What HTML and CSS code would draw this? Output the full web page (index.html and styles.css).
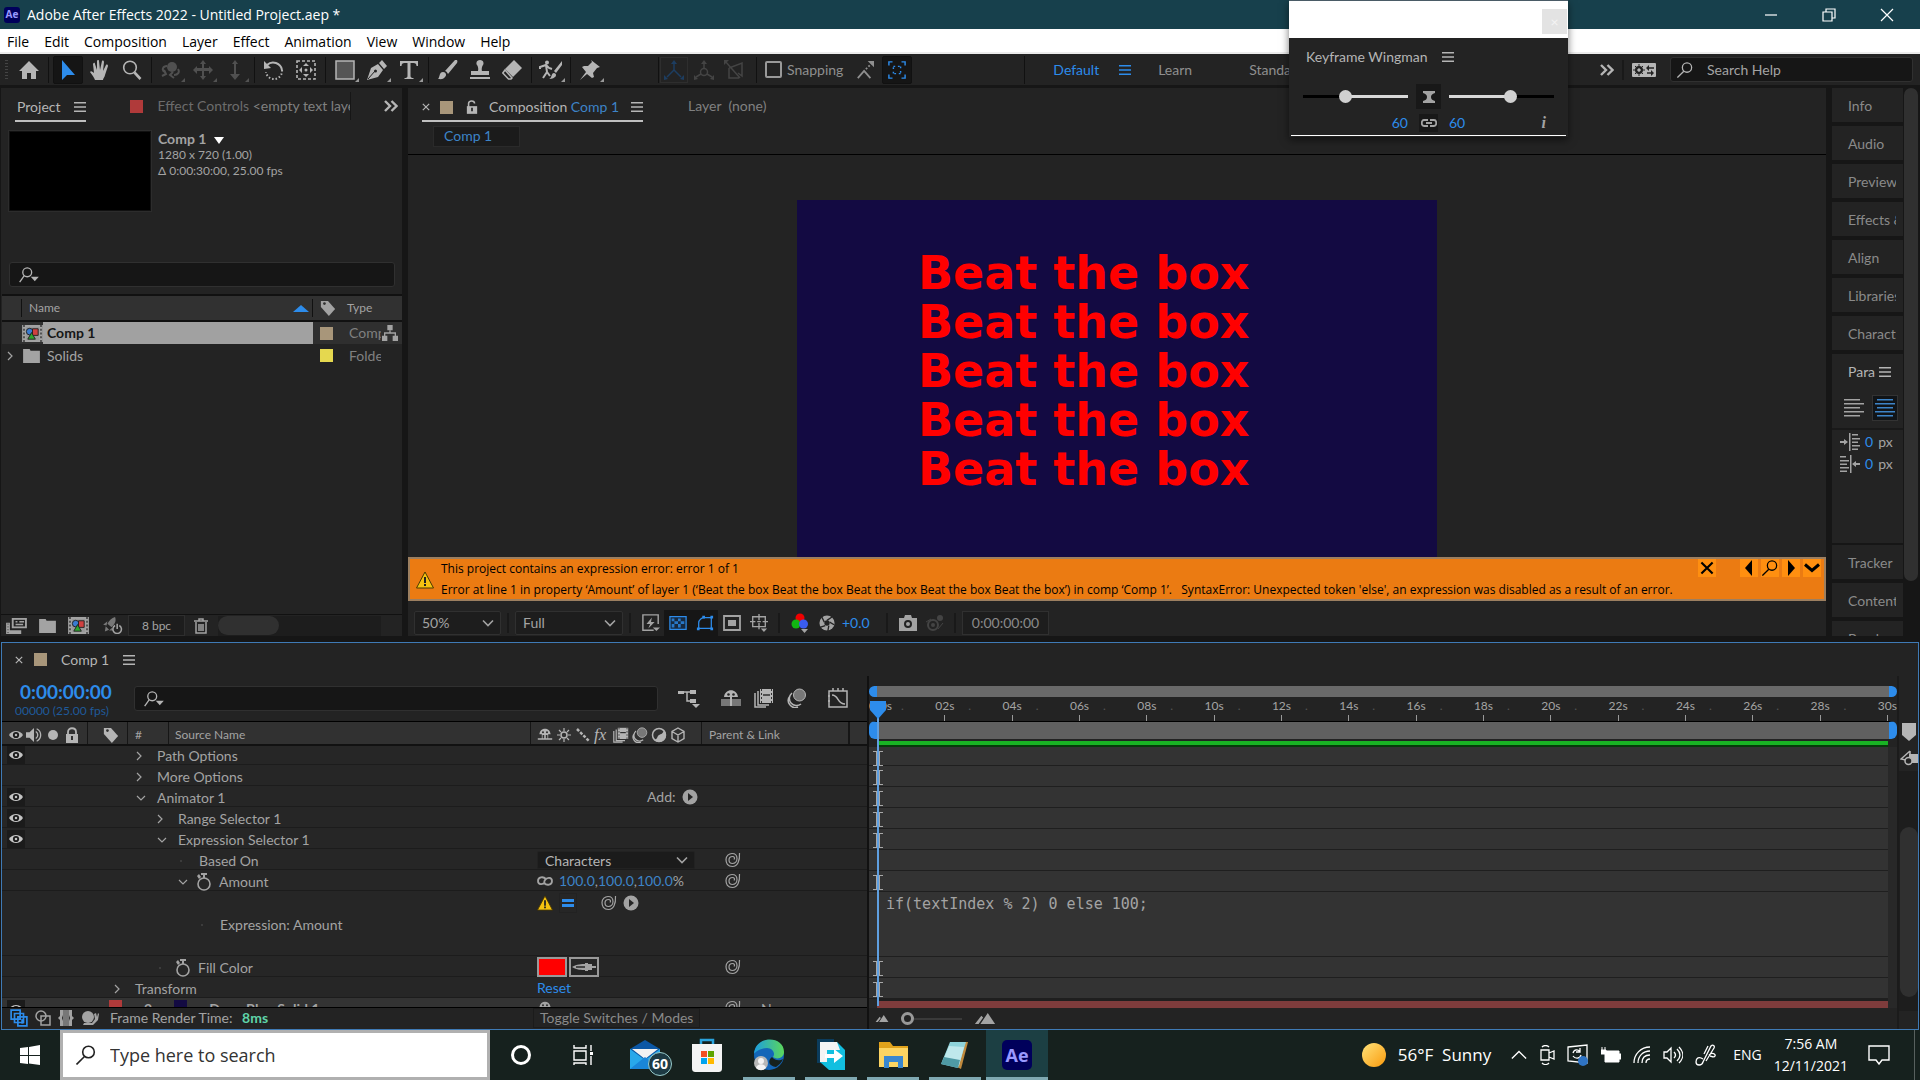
FILE: index.html
```html
<!DOCTYPE html>
<html lang="en">

<head>
  <meta charset="utf-8">
  <title>Adobe After Effects 2022 - Untitled Project.aep *</title>
  <link rel="stylesheet" href="styles.css">
</head>

<body>

  <!-- icon set -->
  <svg class="sprite" aria-hidden="true">
    <symbol id="home" viewBox="0 0 20 20"><path d="M10 1 0 11h3v8h5v-6h4v6h5v-8h3z"/></symbol>
    <symbol id="arrow" viewBox="0 0 20 20"><path d="M4 0v20l5-5h8z"/></symbol>
    <symbol id="hand" viewBox="0 0 20 20"><path d="M5 20c-1-3-3-5-5-8 1-2 3 0 4 1L3 4c1-2 2-1 2 0l2 6V1c1-2 2-1 2 0l1 9 2-9c1-1 2 0 2 1l-1 9 3-6c1-1 2 0 2 1l-3 9c0 2-2 3-2 5z"/></symbol>
    <symbol id="lens" viewBox="0 0 20 20"><g fill="none" stroke="currentColor"><circle cx="8" cy="7.500" r="6.300" stroke-width="1.600"/><path d="m12.500 12.500 6 6.500" stroke-width="2.600"/></g></symbol>
    <symbol id="orbit" viewBox="0 0 20 20"><g fill="none" stroke="currentColor" stroke-width="2"><path d="M6 6C2 6 0 10 4 12M13 15c4 0 6-3 4-6"/><path d="m3 10 2 4-4 2M12 12l-3 3 4 3"/></g><circle cx="11" cy="7" r="5"/></symbol>
    <symbol id="pan" viewBox="0 0 20 20"><path d="M10 0l3 4h-2v4h5V6l4 4-4 4v-3h-5v5h2l-3 4-3-4h2v-5H4v3l-4-4 4-4v2h5V4H7z"/></symbol>
    <symbol id="dolly" viewBox="0 0 20 20"><path d="M10 0l3 4h-2v10h4l-5 6-5-6h4V4H7z"/></symbol>
    <symbol id="rotate" viewBox="0 0 20 20"><path d="M3 5a9 9 0 0 1 15 5" fill="none" stroke="currentColor" stroke-width="2"/><path d="M18 10a8 8 0 0 1-16 2" fill="none" stroke="currentColor" stroke-width="2" stroke-dasharray="1.500 2"/><path d="M0 1v8l7-1z"/></symbol>
    <symbol id="anchor" viewBox="0 0 20 20"><path d="M1 1h18v18H1z" fill="none" stroke="currentColor" stroke-width="1.600" stroke-dasharray="3 2"/><path d="m10 3 3 3H7zM10 17l3-3H7zM3 10l3-3v6zM17 10l-3-3v6z"/><circle cx="10" cy="10" r="1.500"/></symbol>
    <symbol id="rect" viewBox="0 0 20 20"><path d="M1 1h18v18H1z" fill="#555" stroke="currentColor" stroke-width="1.500"/></symbol>
    <symbol id="pen" viewBox="0 0 20 20"><path d="M0 20 4 8l7-4 5 6-5 7zM12 3l3-3 5 6-3 3z"/><path d="m1 19 7-8" stroke="#232323"/><circle cx="8.500" cy="11" r="1.500" fill="#232323"/></symbol>
    <symbol id="text" viewBox="0 0 20 20"><path d="M1 1h18v5h-1.500c0-2-1-3-3-3h-3v13c0 1.500 1 2 3 2v1H5.500v-1c2 0 3-.5 3-2V3h-3c-2 0-3 1-3 3H1z"/></symbol>
    <symbol id="brush" viewBox="0 0 20 20"><path d="M0 19c2-2 1-7 5-7 3 0 4 3 2 5-2 3-5 2-7 2zM7 11 17 0c2-1 3 1 2 3L10 14c-1-2-2-3-3-3z"/></symbol>
    <symbol id="stamp" viewBox="0 0 20 20"><path d="M10 0c4 0 4 4 3 5-2 3-1 6-1 6h7v4H1v-4h7s1-3-1-6c-1-1-1-5 3-5zM0 17h20v2H0z"/></symbol>
    <symbol id="eraser" viewBox="0 0 20 20"><path d="M12 0 20 8 11 17 3 9z"/><path d="M3 10 0.800 13l5.700 6H9l1-1z" fill="none" stroke="currentColor" stroke-width="1.500"/></symbol>
    <symbol id="roto" viewBox="0 0 24 20"><circle cx="8" cy="2.500" r="2"/><path d="M1 9V7l6-2 3 3 3 1M7 5l1 7-4 6M8 12l3 4" fill="none" stroke="currentColor" stroke-width="2"/><path d="M10 19c3-1 2-6 5-6 4 1 2 6-5 6zM15 11l8-10v4l-6 8z"/></symbol>
    <symbol id="pin" viewBox="0 0 20 20"><path d="m11 0 9 7-3 1-4 5 1 4-2 1-5-4-7 6 6-8-4-5 2-1 4 0 4-4z"/></symbol>
    <symbol id="axis" viewBox="0 0 20 20"><path d="M10 10V3M10 10l-7 7M10 10l7 7" fill="none" stroke="currentColor" stroke-width="1.500"/><path d="m10 0 3 4H7zM0 20v-5l4 4zM20 20v-5l-4 4z"/></symbol>
    <symbol id="axis2" viewBox="0 0 20 20"><g fill="none" stroke="currentColor" stroke-width="1.500"><circle cx="10" cy="12" r="3.500"/><path d="M10 9V3M7 14l-5 3M13 14l5 3"/></g><path d="m10 0 3 4H7zM0 20v-5l4 4zM20 20v-5l-4 4z"/></symbol>
    <symbol id="axis3" viewBox="0 0 20 20"><path d="M5 8l13-5v13l-4-3M5 8v10l10 0M1 1l15 17" fill="none" stroke="currentColor" stroke-width="1.500"/><path d="M0 0h5L0 5z"/></symbol>
    <symbol id="snap" viewBox="0 0 20 20"><path d="m2 19 7-8 7 8" fill="none" stroke="currentColor" stroke-width="2"/><path d="m11 9 6-6" stroke="currentColor" stroke-width="2" stroke-dasharray="2 2"/><path d="M13 0h7v7z"/></symbol>
    <symbol id="brackets" viewBox="0 0 20 20"><g fill="none" stroke="currentColor" stroke-width="1.600"><path d="M1 5V1h4M15 1h4v4M19 15v4h-4M5 19H1v-4"/><path d="M6 9V6h3M11 6h3v3M14 11v3h-3M9 14H6v-3" stroke-dasharray="2 1"/></g></symbol>
    <symbol id="menu" viewBox="0 0 12 12"><path d="M0 1h12v1.500H0zM0 5.300h12v1.500H0zM0 9.600h12v1.500H0z"/></symbol>
    <symbol id="more" viewBox="0 0 14 12"><path d="m1 1 5 5-5 5M7.500 1l5 5-5 5" fill="none" stroke="currentColor" stroke-width="2.400"/></symbol>
    <symbol id="settings" viewBox="0 0 24 14"><rect width="24" height="14" rx="1"/><circle cx="7" cy="7" r="3" fill="none" stroke="#232323" stroke-width="2"/><path d="M7 1v12M1 7h12M3 3l8 8M11 3l-8 8" stroke="#232323" stroke-width="1"/><circle cx="7" cy="7" r="1.500"/><path d="M15 5h7M15 10h6" stroke="#232323" stroke-width="1.500"/><path d="m14 5 3-3v6zM22 10l-3-3v6z" fill="#232323"/></symbol>
    <symbol id="search" viewBox="0 0 20 20"><g fill="none" stroke="currentColor" stroke-width="1.600"><circle cx="12.500" cy="7" r="5.800"/><path d="m8.500 11.500-8 8"/></g></symbol>
    <symbol id="searchmenu" viewBox="0 0 22 18"><g fill="none" stroke="currentColor" stroke-width="1.500"><circle cx="9" cy="6" r="5"/><path d="m5.500 10-5 7"/></g><path d="M13 11h9l-4.500 5z"/></symbol>
    <symbol id="x" viewBox="0 0 10 10"><path d="m1 1 8 8M9 1 1 9" fill="none" stroke="currentColor" stroke-width="1.500"/></symbol>
    <symbol id="unlock" viewBox="0 0 14 16"><path d="M3 8V4c0-4 7-4 7 0" fill="none" stroke="currentColor" stroke-width="1.800"/><path d="M1 7h12v9H1z"/><path d="M7 9v4" stroke="#232323" stroke-width="2"/></symbol>
    <symbol id="lock" viewBox="0 0 14 16"><path d="M3 8V5c0-5 8-5 8 0v3" fill="none" stroke="currentColor" stroke-width="1.800"/><path d="M1 7h12v9H1z"/><path d="M7 9v4" stroke="#313131" stroke-width="2"/></symbol>
    <symbol id="tag" viewBox="0 0 18 18"><path d="M1 1h8l8 9-7 8L1 8z"/><circle cx="5" cy="4" r="1.500" fill="#313131"/></symbol>
    <symbol id="comp" viewBox="0 0 22 18"><path d="M0 0h22v18H0z"/><path d="M2 0v18M20 0v18" stroke="#333" stroke-width="1.500" stroke-dasharray="2 2"/><path d="M4 2h14v14H4z" fill="#999"/><circle cx="8" cy="7" r="3.500" fill="#3a7bd0" stroke="#222"/><path d="M11 4h6v7h-6z" fill="#d04040" stroke="#222"/><path d="m10 8 4 7H6z" fill="#2ea52e" stroke="#222"/></symbol>
    <symbol id="folder" viewBox="0 0 18 15"><path d="M0 0h7l1 2h10v13H0z"/></symbol>
    <symbol id="flow" viewBox="0 0 18 18"><path d="M6 0h6v6H6zM0 12h6v6H0zM12 12h6v6h-6z"/><path d="M9 6v3M3 13V9h12v4" fill="none" stroke="currentColor" stroke-width="1.500"/></symbol>
    <symbol id="interpret" viewBox="0 0 22 18"><path d="M0 6h4v8h12v4H0zM6 1h16v11H6z"/><path d="M8 3h12v7H8z" fill="#232323"/><path d="M10 5h2M14 5h5M10 8h8" stroke="currentColor" stroke-width="1.500"/><path d="M2 7v10" stroke="#232323" stroke-dasharray="1 2"/></symbol>
    <symbol id="rocket" viewBox="0 0 22 20"><path d="M14 0c2 5-1 9-4 12l-5-4c2-4 5-7 9-8zM0 9l5-4-1 5zM10 13l2 3-5 0zM3 11l4 4-5 2z" fill="#777"/><path d="M14 10a5 5 0 1 0 5 0M16.500 8v6" fill="none" stroke="currentColor" stroke-width="1.800"/></symbol>
    <symbol id="trash" viewBox="0 0 14 16"><path d="M0 3h14M5 3V1h4v2M2 4v11h10V4M5 6v7M7 6v7M9 6v7" fill="none" stroke="currentColor" stroke-width="1.500"/></symbol>
    <symbol id="warn" viewBox="0 0 18 18"><path d="M9 1 17.500 17H.5z" fill="#f5c211" stroke="#4a3a00" stroke-width="1"/><path d="M8 6h2v6H8zM8 13h2v2H8z" fill="#222"/></symbol>
    <symbol id="chev" viewBox="0 0 12 8"><path d="m1 1.500 5 5 5-5" fill="none" stroke="currentColor" stroke-width="1.600"/></symbol>
    <symbol id="heavy" viewBox="0 0 16 10"><path d="m1 1.500 7 6 7-6" fill="none" stroke="currentColor" stroke-width="3"/></symbol>
    <symbol id="closed" viewBox="0 0 16 16"><path d="m6 4 4 4-4 4" fill="none" stroke="currentColor" stroke-width="1.200"/></symbol>
    <symbol id="open" viewBox="0 0 16 16"><path d="m6 6 4 4 4-4" fill="none" stroke="currentColor" stroke-width="1.200"/></symbol>
    <symbol id="prev" viewBox="0 0 18 18"><path d="M12 1v16L5 9z"/></symbol>
    <symbol id="next" viewBox="0 0 18 18"><path d="M6 1v16l7-8z"/></symbol>
    <symbol id="draft" viewBox="0 0 20 20"><path d="M13 18H1V1h17v10" fill="none" stroke="currentColor" stroke-width="1.600"/><path d="m11 4-6 7h4l-2 5 7-7h-4z"/><path d="M12 15h8l-4 4z"/></symbol>
    <symbol id="grid" viewBox="0 0 20 16"><path d="M1 1h18v14H1z" fill="#16293f" stroke="currentColor" stroke-width="1.400"/><path d="M3 3h3v3H3zM10 3h3v3h-3zM6 6h4v3H6zM13 6h4v3h-4zM3 9h3v4H3zM10 9h3v4h-3z" opacity=".8"/></symbol>
    <symbol id="mask" viewBox="0 0 20 18"><path d="M3 15V9c0-4 4-6 6-6h8v12z" fill="none" stroke="currentColor" stroke-width="1.400"/><path d="M1 14h3v3H1zM16 14h3v3h-3zM16 1h3v3h-3zM7 1h3v3H7z"/></symbol>
    <symbol id="roi" viewBox="0 0 18 16"><path d="M1 1h16v14H1z" fill="none" stroke="currentColor" stroke-width="1.800"/><path d="M5 5h8v6H5z"/></symbol>
    <symbol id="guides" viewBox="0 0 20 20"><path d="M3 3h14v11H3zM10 0v7M10 10v7M0 8.500h6M14 8.500h6M8 8.500h4" fill="none" stroke="currentColor" stroke-width="1.500"/><path d="M12 16h7l-3.500 4z"/></symbol>
    <symbol id="rgb" viewBox="0 0 18 20"><circle cx="9" cy="5" r="4.500" fill="#f00000"/><circle cx="5" cy="11" r="4.500" fill="#12b512"/><circle cx="12.500" cy="11" r="4.500" fill="#3a5cf0"/><path d="M10 16h7l-3.500 4z"/></symbol>
    <symbol id="shutter" viewBox="0 0 18 18"><circle cx="9" cy="9" r="8.500"/><circle cx="9" cy="9" r="3" fill="#232323"/><path d="M9 6 15 2M12 8l5 3M11 12l-1 6M7 12l-6 2M6 8 3 2" stroke="#232323" stroke-width="1.500"/></symbol>
    <symbol id="camera" viewBox="0 0 18 16"><path d="M0 3h5l1-3h6l1 3h5v13H0z"/><circle cx="9" cy="9" r="4" fill="#232323"/><circle cx="9" cy="9" r="2"/></symbol>
    <symbol id="snapshot" viewBox="0 0 18 16"><circle cx="7" cy="10" r="5" fill="none" stroke="currentColor" stroke-width="2"/><circle cx="7" cy="10" r="2"/><circle cx="14" cy="3" r="3"/><path d="M0 7l5-3M12 14l5-6" stroke="currentColor"/></symbol>
    <symbol id="tree" viewBox="0 0 22 20"><path d="M0 3h6v3H0zM12 2h6v4h-6zM12 11h6v4h-6zM14 16h8l-4 4z"/><path d="M5 4h9M9 4v9h4" fill="none" stroke="currentColor" stroke-width="1.500"/></symbol>
    <symbol id="shy" viewBox="0 0 20 18"><path d="M3 8c1-9 13-9 14 0h-3v5h5v2H1v-2h5V8z"/><circle cx="7.500" cy="5.500" r="1.300" fill="#313131"/><circle cx="12.500" cy="5.500" r="1.300" fill="#313131"/><path d="M8 9v4M12 9v4" stroke="#313131" stroke-width="2"/></symbol>
    <symbol id="shybar" viewBox="0 0 20 18"><path d="M0 10h20v7H0z" fill="#777"/><path d="M3 8c1-9 13-9 14 0h-6v9H9V8z"/><circle cx="7.500" cy="5.500" r="1.300" fill="#232323"/><circle cx="12.500" cy="5.500" r="1.300" fill="#232323"/></symbol>
    <symbol id="film" viewBox="0 0 20 20"><path d="M6 1h13v14H6z"/><path d="M7.500 1v14M17.500 1v14" stroke="#313131" stroke-width="1" stroke-dasharray="2 2"/><path d="M9 7h7" stroke="#313131" stroke-width="1.500"/><path d="M4 3v14h11M1 5v14h11" fill="none" stroke="currentColor" stroke-width="1.500"/></symbol>
    <symbol id="blur" viewBox="0 0 20 20"><circle cx="12.500" cy="7" r="6" fill="#777" stroke="currentColor"/><path d="M5 5a7 7 0 0 0 9 11M3 8a7 7 0 0 0 8 11" fill="none" stroke="currentColor" stroke-width="1.500"/></symbol>
    <symbol id="curve" viewBox="0 0 20 20"><path d="M1 3h18v16H1zM4 7c7 0 5 9 13 9M5 0v3M10 0v3M15 0v3M0 8h2M0 13h2" fill="none" stroke="currentColor" stroke-width="1.500"/></symbol>
    <symbol id="eye" viewBox="0 0 18 14"><path d="M0 7C4 0 14 0 18 7c-4 7-14 7-18 0z"/><circle cx="9" cy="7" r="4" fill="#1b1b1b"/><circle cx="9" cy="7" r="1.600"/></symbol>
    <symbol id="speaker" viewBox="0 0 18 16"><path d="M0 5h4l5-5v16l-5-5H0z"/><path d="M11 4c3 2 3 6 0 8M12 1c6 3 6 11 0 14" fill="none" stroke="currentColor" stroke-width="1.500"/></symbol>
    <symbol id="sun" viewBox="0 0 16 16"><circle cx="8" cy="8" r="3" fill="none" stroke="currentColor" stroke-width="1.500"/><path d="M8 1v3M8 12v3M1 8h3M12 8h3M3 3l2 2M13 13l-2-2M13 3l-2 2M3 13l2-2" stroke="currentColor" stroke-width="1.200"/></symbol>
    <symbol id="quality" viewBox="0 0 16 16"><path d="m2 2 12 12" stroke="currentColor" stroke-width="2.500" stroke-dasharray="3 1.500"/></symbol>
    <symbol id="adjust" viewBox="0 0 16 16"><circle cx="8" cy="8" r="6.500" fill="none" stroke="currentColor" stroke-width="1.500"/><path d="M13 3A7 7 0 0 1 3 13c4-1 3-4 5-5s4-1 5-5z"/></symbol>
    <symbol id="cube" viewBox="0 0 16 16"><path d="m8 1 6 3.500v7L8 15l-6-3.500v-7zM2 4.500 8 8l6-3.500M8 8v7" fill="none" stroke="currentColor" stroke-width="1.400"/></symbol>
    <symbol id="play" viewBox="0 0 16 16"><circle cx="8" cy="8" r="7.500"/><path d="m6 4 5 4-5 4z" fill="#262626"/></symbol>
    <symbol id="spiral" viewBox="0 0 16 16"><path d="M14.500 1c.5 8-2 13.500-7 13.500S1 11 1 7.500 4 1.500 7 1.500s5 2 5 5-2 5-4.500 5S4 10 4 8s1.500-3.500 3.500-3.500S10 6 9 7.500" fill="none" stroke="currentColor" stroke-width="1.200"/></symbol>
    <symbol id="watch" viewBox="0 0 14 18"><circle cx="7" cy="11" r="6" fill="none" stroke="currentColor" stroke-width="1.600"/><path d="M4 0h6v2H4zM6 1h2v4H6zM0 3l2-2 2 3-2 2z"/></symbol>
    <symbol id="link" viewBox="0 0 16 10"><path d="M9 3c-3-3-8-2-8 2s5 4 7 1M7 7c3 3 8 2 8-2s-5-4-7-1l-1 2" fill="none" stroke="currentColor" stroke-width="1.800"/></symbol>
    <symbol id="chain" viewBox="0 0 16 8"><path d="M7 1H3C0 1 0 7 3 7h4M9 1h4c3 0 3 6 0 6H9M5 4h6" fill="none" stroke="currentColor" stroke-width="1.800"/></symbol>
    <symbol id="dropper" viewBox="0 0 24 10"><path d="M0 5c5-3 9-3 14-3v6C9 8 5 8 0 5z"/><path d="M4 5h9" stroke="#262626" stroke-width="1.500"/><path d="M13 1h3v1h4v2h4v2h-4v2h-4v1h-3z"/></symbol>
    <symbol id="hourglass" viewBox="0 0 12 12"><path d="M0 0h12v2C9 3 8 4 8 6s1 3 4 4v2H0v-2c3-1 4-2 4-4S3 3 0 2z"/></symbol>
    <symbol id="marker" viewBox="0 0 14 18"><path d="M0 0h14v12l-7 6-7-6z"/></symbol>
    <symbol id="button" viewBox="0 0 18 16"><path d="M9 4h9v9H9z"/><path d="M10 1 1 9l5 1M10 1v7" fill="none" stroke="currentColor" stroke-width="1.500"/><circle cx="8.500" cy="11" r="3.500" fill="#232323" stroke="currentColor" stroke-width="1.500"/></symbol>
    <symbol id="left" viewBox="0 0 20 18"><path d="M0 0h16v1.500H0zM0 4h20v1.500H0zM0 8h16v1.500H0zM0 12h20v1.500H0zM0 16h16v1.500H0z"/></symbol>
    <symbol id="center" viewBox="0 0 20 18"><path d="M2 0h16v1.500H2zM0 4h20v1.500H0zM2 8h16v1.500H2zM0 12h20v1.500H0zM2 16h16v1.500H2z"/></symbol>
    <symbol id="indent" viewBox="0 0 20 18"><path d="M9 0h1.500v18H9zM12 1h6v1.500h-6zM12 5h8v1.500h-8zM12 8.500h6V10h-6zM12 12h8v1.500h-8zM12 15.500h6V17h-6zM0 8h4V6l4 3-4 3v-2H0z"/></symbol>
    <symbol id="outdent" viewBox="0 0 20 18"><path d="M10 0h1.500v18H10zM0 1h6v1.500H0zM0 5h9v1.500H0zM0 8.500h7V10H0zM0 12h9v1.500H0zM0 15.500h7V17H0zM20 8h-4V6l-4 3 4 3v-2h4z"/></symbol>
    <symbol id="hill" viewBox="0 0 22 12"><path d="m0 12 7-9 2 2-5 7zM6 12 14 0l8 12z"/></symbol>
    <symbol id="stack" viewBox="0 0 16 16"><path d="M1 1h8v8H1zM4 4h8v8H4zM7 7h8v8H7z" fill="#1b1b1b" stroke="currentColor" stroke-width="1.500"/><path d="M10 9h2v4h-2z"/></symbol>
    <symbol id="modes" viewBox="0 0 16 16"><circle cx="6" cy="6" r="5" fill="none" stroke="currentColor" stroke-width="1.500"/><path d="M6 6h9v9H6z" fill="none" stroke="currentColor" stroke-width="1.500"/></symbol>
    <symbol id="braces" viewBox="0 0 16 16"><path d="M5 0h6v16H5z" fill="#777"/><path d="M5 0v5L4 8l1 3v5H2v-6L0 8l2-2V0zM11 0v5l1 3-1 3v5h3v-6l2-2-2-2V0z"/></symbol>
    <symbol id="snail" viewBox="0 0 18 16"><circle cx="7" cy="7" r="6"/><path d="M3 13h8l3-4-1-5 2-1 1 4 1-4 1 1-1 6-5 5H2z"/></symbol>
    <symbol id="windows" viewBox="0 0 20 20"><path d="M0 3l8-1v8H0zM9 2l11-2v10H9zM0 11h8v8l-8-1zM9 11h11v9L9 18.500z"/></symbol>
    <symbol id="taskview" viewBox="0 0 20 20"><path d="M1 6h12v9H1zM1 0v3h12V0M1 20v-2h12v2M18 0v6M18 11v9" fill="none" stroke="currentColor" stroke-width="1.400"/><path d="M17 7h3v3h-3z"/></symbol>
    <symbol id="caret" viewBox="0 0 18 12"><path d="m1 10 8-8 8 8" fill="none" stroke="currentColor" stroke-width="1.500"/></symbol>
  </svg>

  <header class="titlebar">
    <span class="ae small">Ae</span>
    <span>Adobe After Effects 2022 - Untitled Project.aep *</span>
    <div class="winbuttons">
      <button aria-label="Minimize"><svg width="14" height="14" viewBox="0 0 14 14"><path d="M1 7h12" stroke="#fff" stroke-width="1.200"/></svg></button>
      <button aria-label="Restore"><svg width="14" height="14" viewBox="0 0 14 14"><path d="M1 4h9v9H1zM4 4V1h9v9h-3" fill="none" stroke="#fff" stroke-width="1.200"/></svg></button>
      <button aria-label="Close"><svg width="14" height="14" viewBox="0 0 14 14"><path d="m1 1 12 12M13 1 1 13" stroke="#fff" stroke-width="1.200"/></svg></button>
    </div>
  </header>

  <nav class="menubar">
    <a href="#">File</a><a href="#">Edit</a><a href="#">Composition</a><a href="#">Layer</a><a href="#">Effect</a><a href="#">Animation</a><a href="#">View</a><a href="#">Window</a><a href="#">Help</a>
  </nav>

  <div class="toolbar">
    <span class="grip"></span>
    <button class="homebtn" aria-label="Home"><svg class="i20"><use href="#home"/></svg></button>
    <div class="group">
      <button class="on" aria-label="Selection"><svg class="i20"><use href="#arrow"/></svg></button>
      <button aria-label="Hand"><svg class="i20"><use href="#hand"/></svg></button>
      <button aria-label="Zoom"><svg class="i20"><use href="#lens"/></svg></button>
    </div>
    <div class="group dim">
      <button class="more" aria-label="Orbit"><svg class="i20"><use href="#orbit"/></svg></button>
      <button class="more" aria-label="Pan"><svg class="i20"><use href="#pan"/></svg></button>
      <button class="more" aria-label="Dolly"><svg class="i20"><use href="#dolly"/></svg></button>
    </div>
    <div class="group">
      <button aria-label="Rotation"><svg class="i20"><use href="#rotate"/></svg></button>
      <button aria-label="Pan behind"><svg class="i20"><use href="#anchor"/></svg></button>
    </div>
    <div class="group">
      <button class="more" aria-label="Rectangle"><svg class="i20"><use href="#rect"/></svg></button>
      <button class="more" aria-label="Pen"><svg class="i20"><use href="#pen"/></svg></button>
      <button class="more" aria-label="Type"><svg class="i20"><use href="#text"/></svg></button>
    </div>
    <div class="group">
      <button aria-label="Brush"><svg class="i20"><use href="#brush"/></svg></button>
      <button aria-label="Clone stamp"><svg class="i20"><use href="#stamp"/></svg></button>
      <button aria-label="Eraser"><svg class="i20"><use href="#eraser"/></svg></button>
    </div>
    <div class="group">
      <button class="more" aria-label="Roto brush"><svg class="i24"><use href="#roto"/></svg></button>
    </div>
    <div class="group pins">
      <button class="more" aria-label="Puppet pin"><svg class="i20"><use href="#pin"/></svg></button>
    </div>
    <div class="group faint">
      <button class="frame" aria-label="Local axis"><svg class="i20"><use href="#axis"/></svg></button>
      <button aria-label="World axis"><svg class="i20"><use href="#axis2"/></svg></button>
      <button aria-label="View axis"><svg class="i20"><use href="#axis3"/></svg></button>
    </div>
    <div class="group snapping">
      <input type="checkbox" id="snapping"><label for="snapping">Snapping</label>
      <button aria-label="Snap edges"><svg class="i18"><use href="#snap"/></svg></button>
      <button class="on" aria-label="Snap features"><svg class="i18"><use href="#brackets"/></svg></button>
    </div>
    <div class="workspaces">
      <a class="blue" href="#">Default</a><svg class="i12 blue"><use href="#menu"/></svg>
      <a href="#">Learn</a><a href="#">Standard</a>
    </div>
    <div class="toolend">
      <svg class="more-i"><use href="#more"/></svg>
      <span class="sep"></span>
      <svg class="set-i"><use href="#settings"/></svg>
      <label class="field help"><svg class="i16"><use href="#search"/></svg><input type="text" placeholder="Search Help" aria-label="Search Help"></label>
    </div>
  </div>

  <main class="workspace">
    <section class="panel project">
      <div class="tabs">
        <div class="tab active">Project <svg class="i12"><use href="#menu"/></svg></div>
        <span class="swatch red"></span>
        <span class="effect">Effect Controls <span>&lt;empty text layer&gt;</span></span>
        <svg class="more-i"><use href="#more"/></svg>
      </div>
      <div class="info">
        <div class="thumb"></div>
        <div>
          <p class="name">Comp 1 <span class="tri"></span></p>
          <p>1280 x 720 (1.00)</p>
          <p>&Delta; 0:00:30:00, 25.00 fps</p>
        </div>
      </div>
      <label class="field"><svg class="sm-i"><use href="#searchmenu"/></svg><input type="text" aria-label="Search project"></label>
      <table class="items">
        <thead>
          <tr>
            <th class="c-icon"></th>
            <th class="c-name"><div>Name <i class="sort"></i></div></th>
            <th class="c-tag"><svg class="i16"><use href="#tag"/></svg></th>
            <th class="c-type">Type</th>
            <th class="c-flow"></th>
          </tr>
        </thead>
        <tbody>
          <tr class="sel">
            <td><svg class="comp-i"><use href="#comp"/></svg></td>
            <td class="hl">Comp 1</td>
            <td><span class="swatch tan"></span></td>
            <td class="c-type"><div>Composition</div></td>
            <td><svg class="i16"><use href="#flow"/></svg></td>
          </tr>
          <tr>
            <td><div class="fold"><svg class="i16"><use href="#closed"/></svg><svg class="folder-i"><use href="#folder"/></svg></div></td>
            <td>Solids</td>
            <td><span class="swatch yellow"></span></td>
            <td class="c-type"><div>Folder</div></td>
            <td></td>
          </tr>
        </tbody>
      </table>
      <div class="projfoot">
        <svg class="comp-i"><use href="#interpret"/></svg>
        <svg class="folder-i"><use href="#folder"/></svg>
        <svg class="comp-i"><use href="#comp"/></svg>
        <svg class="comp-i"><use href="#rocket"/></svg>
        <button class="bpc">8 bpc</button>
        <svg class="i16"><use href="#trash"/></svg>
        <div class="hscroll"><i></i></div>
      </div>
    </section>

    <section class="panel viewer">
      <div class="tabs">
        <div class="tab active">
          <svg class="i8"><use href="#x"/></svg><span class="swatch tan"></span><svg class="lock-i"><use href="#unlock"/></svg>
          <span>Composition <b>Comp 1</b></span><svg class="i12"><use href="#menu"/></svg>
        </div>
        <span class="layer">Layer&nbsp; (none)</span>
      </div>
      <div class="crumbs"><a href="#">Comp 1</a></div>
      <div class="stage">
        <div class="canvas">
          <div>Beat the box</div>
          <div>Beat the box</div>
          <div>Beat the box</div>
          <div>Beat the box</div>
          <div>Beat the box</div>
        </div>
      </div>
      <div class="error">
        <svg class="i18"><use href="#warn"/></svg>
        <div class="msg">
          <p>This project contains an expression error: error 1 of 1</p>
          <p>Error at line 1 in property &lsquo;Amount&rsquo; of layer 1 (&lsquo;Beat the box Beat the box Beat the box Beat the box Beat the box&rsquo;) in comp &lsquo;Comp 1&rsquo;.&nbsp;&nbsp; SyntaxError: Unexpected token &#39;else&#39;, an expression was disabled as a result of an error.</p>
        </div>
        <div class="errbtns">
          <button class="dismiss" aria-label="Dismiss"><svg class="i14"><use href="#x"/></svg></button>
          <button aria-label="Previous error"><svg class="i18"><use href="#prev"/></svg></button>
          <button aria-label="Reveal"><svg class="i16"><use href="#search"/></svg></button>
          <button aria-label="Next error"><svg class="i18"><use href="#next"/></svg></button>
          <button aria-label="Collapse"><svg class="cheavy"><use href="#heavy"/></svg></button>
        </div>
      </div>
      <div class="viewfoot">
        <span class="pick zoom"><select aria-label="Magnification"><option>50%</option></select><svg class="i12"><use href="#chev"/></svg></span>
        <span class="sep"></span>
        <span class="pick res"><select aria-label="Resolution"><option>Full</option></select><svg class="i12"><use href="#chev"/></svg></span>
        <span class="sep"></span>
        <div class="viewbtns">
          <button aria-label="Fast previews"><svg class="i18"><use href="#draft"/></svg></button>
          <button class="on" aria-label="Transparency grid"><svg class="i18"><use href="#grid"/></svg></button>
          <button class="on" aria-label="Mask visibility"><svg class="i18"><use href="#mask"/></svg></button>
          <button aria-label="Region of interest"><svg class="i18"><use href="#roi"/></svg></button>
          <button aria-label="Guides"><svg class="i18"><use href="#guides"/></svg></button>
        </div>
        <span class="sep"></span>
        <div class="viewbtns">
          <button aria-label="Channels"><svg class="i20"><use href="#rgb"/></svg></button>
          <button aria-label="Reset exposure"><svg class="i16"><use href="#shutter"/></svg></button>
        </div>
        <span class="blue exposure">+0.0</span>
        <span class="sep"></span>
        <div class="viewbtns">
          <button aria-label="Take snapshot"><svg class="i18"><use href="#camera"/></svg></button>
          <button class="off" aria-label="Show snapshot"><svg class="i18"><use href="#snapshot"/></svg></button>
        </div>
        <span class="sep"></span>
        <button class="timebox">0:00:00:00</button>
      </div>
    </section>

    <aside class="side">
      <div class="stackp">
        <a href="#">Info</a>
        <a href="#">Audio</a>
        <a href="#">Preview</a>
        <a href="#">Effects &amp; Presets</a>
        <a href="#">Align</a>
        <a href="#">Libraries</a>
        <a href="#">Character</a>
        <div class="para">
          <h2>Para <svg class="i12"><use href="#menu"/></svg></h2>
          <div class="aligns">
            <button aria-label="Left align"><svg class="i20"><use href="#left"/></svg></button>
            <button class="on" aria-label="Center"><svg class="i20"><use href="#center"/></svg></button>
          </div>
          <div class="ind"><svg class="i20"><use href="#indent"/></svg><span class="blue">0</span> px</div>
          <div class="ind"><svg class="i20"><use href="#outdent"/></svg><span class="blue">0</span> px</div>
        </div>
        <a href="#">Tracker</a>
        <a href="#">Content-Aware Fill</a>
        <a href="#">Brushes</a>
      </div>
      <div class="vscroll"><i></i></div>
    </aside>
  </main>

  <section class="timeline">
    <div class="tltab">
      <svg class="i8"><use href="#x"/></svg><span class="swatch tan"></span><span>Comp 1</span><svg class="i12"><use href="#menu"/></svg>
    </div>
    <div class="tlbody">
      <div class="outline">
        <div class="tltools">
          <div class="tc"><b>0:00:00:00</b><span>00000 (25.00 fps)</span></div>
          <label class="field"><svg class="sm-i"><use href="#searchmenu"/></svg><input type="text" aria-label="Search layers"></label>
          <div class="tlicons">
            <svg class="i22"><use href="#tree"/></svg>
            <svg class="i20"><use href="#shybar"/></svg>
            <svg class="i20"><use href="#film"/></svg>
            <svg class="i20"><use href="#blur"/></svg>
            <svg class="i20"><use href="#curve"/></svg>
          </div>
        </div>
        <div class="cols">
          <div class="c-av">
            <svg class="i14"><use href="#eye"/></svg><svg class="i16"><use href="#speaker"/></svg><i class="solo"></i><svg class="i16"><use href="#lock"/></svg>
          </div>
          <div class="c-label"><svg class="i16"><use href="#tag"/></svg></div>
          <div class="c-num">#</div>
          <div class="c-source">Source Name</div>
          <div class="c-switch">
            <svg class="i16"><use href="#shy"/></svg><svg class="i16"><use href="#sun"/></svg><svg class="i16"><use href="#quality"/></svg><em>fx</em><svg class="i16"><use href="#film"/></svg><svg class="i16"><use href="#blur"/></svg><svg class="i16"><use href="#adjust"/></svg><svg class="i16"><use href="#cube"/></svg>
          </div>
          <div class="c-parent">Parent &amp; Link</div>
          <div class="c-rest"></div>
        </div>
        <div class="rows">
          <div class="row first"><span class="vis"><svg class="i14"><use href="#eye"/></svg></span><div class="prop lv1"><svg class="i16"><use href="#closed"/></svg>Path Options</div></div>
          <div class="row"><span class="vis none"></span><div class="prop lv1"><svg class="i16"><use href="#closed"/></svg>More Options</div></div>
          <div class="row"><span class="vis"><svg class="i14"><use href="#eye"/></svg></span><div class="prop lv1"><svg class="i16"><use href="#open"/></svg>Animator 1</div><div class="val add">Add: <svg class="i16"><use href="#play"/></svg></div></div>
          <div class="row"><span class="vis"><svg class="i14"><use href="#eye"/></svg></span><div class="prop lv2"><svg class="i16"><use href="#closed"/></svg>Range Selector 1</div></div>
          <div class="row"><span class="vis"><svg class="i14"><use href="#eye"/></svg></span><div class="prop lv2"><svg class="i16"><use href="#open"/></svg>Expression Selector 1</div></div>
          <div class="row"><span class="vis none"></span><div class="prop lv3"><i class="nokey"></i>Based On</div>
            <div class="val"><span class="pick chars"><select aria-label="Based On"><option>Characters</option></select><svg class="i12"><use href="#chev"/></svg></span></div><svg class="i16 whip"><use href="#spiral"/></svg></div>
          <div class="row"><span class="vis none"></span><div class="prop lv3"><svg class="i16"><use href="#open"/></svg><svg class="watch-i"><use href="#watch"/></svg>Amount</div>
            <div class="val amount"><svg class="i16"><use href="#link"/></svg><span><b>100.0</b>,<b>100.0</b>,<b>100.0</b>%</span></div><svg class="i16 whip"><use href="#spiral"/></svg></div>
          <div class="row tall"><span class="vis none"></span><div class="prop lv4"><i class="nokey"></i>Expression: Amount</div>
            <div class="val exprbtns"><svg class="i16"><use href="#warn"/></svg><button class="eq" aria-label="Enable expression"><i></i></button><svg class="i16"><use href="#spiral"/></svg><svg class="i16"><use href="#play"/></svg></div></div>
          <div class="row"><span class="vis none"></span><div class="prop lv2"><i class="nokey"></i><svg class="watch-i"><use href="#watch"/></svg>Fill Color</div>
            <div class="val"><button class="well" aria-label="Fill color"></button><button class="drop" aria-label="Eyedropper"><svg class="dropper-i"><use href="#dropper"/></svg></button></div><svg class="i16 whip"><use href="#spiral"/></svg></div>
          <div class="row"><span class="vis none"></span><div class="prop lv0"><svg class="i16"><use href="#closed"/></svg>Transform</div><div class="val"><a class="blue" href="#">Reset</a></div></div>
          <div class="row cut">
            <span class="vis"><svg class="i14"><use href="#eye"/></svg></span>
            <div class="solidname"><span class="swatch red"></span><b>2</b><span class="swatch navy"></span><b>Deep Blue Solid 1</b></div>
            <div class="val"><svg class="i16"><use href="#shy"/></svg></div>
            <svg class="i16 whip"><use href="#spiral"/></svg>
            <span class="none-t">None</span>
          </div>
        </div>
        <div class="tlfoot">
          <svg class="i18 blue"><use href="#stack"/></svg><svg class="i16"><use href="#modes"/></svg><svg class="i16"><use href="#braces"/></svg><svg class="i18"><use href="#snail"/></svg>
          <span class="frt">Frame Render Time: <b>8ms</b></span>
          <button class="toggle">Toggle Switches / Modes</button>
        </div>
      </div>

      <div class="graph">
        <div class="playhead"><svg viewBox="0 0 16 18" width="16" height="18"><path d="M0 0h16v9l-8 9-8-9z" fill="#2d8ceb"/></svg></div>
        <div class="navbar"></div>
        <div class="ruler">
          <span>0:00s</span><span>02s</span><span>04s</span><span>06s</span><span>08s</span><span>10s</span><span>12s</span><span>14s</span><span>16s</span><span>18s</span><span>20s</span><span>22s</span><span>24s</span><span>26s</span><span>28s</span><span>30s</span>
        </div>
        <div class="workarea"></div>
        <div class="cache"></div>
        <div class="lanes">
          <div class="lane first key"></div>
          <div class="lane key"></div>
          <div class="lane key"></div>
          <div class="lane key"></div>
          <div class="lane key"></div>
          <div class="lane"></div>
          <div class="lane key"></div>
          <div class="lane tall"><code>if(textIndex % 2) 0 else 100;</code></div>
          <div class="lane key"></div>
          <div class="lane key"></div>
          <div class="lane bar"></div>
        </div>
        <div class="tlzoom">
          <svg class="hill-s"><use href="#hill"/></svg>
          <input type="range" min="0" max="100" value="0" aria-label="Timeline zoom">
          <svg class="hill-b"><use href="#hill"/></svg>
        </div>
      </div>

      <div class="tlside">
        <svg class="marker-i"><use href="#marker"/></svg>
        <svg class="i18"><use href="#button"/></svg>
        <div class="vscroll"><i></i></div>
      </div>
    </div>
  </section>

  <footer class="taskbar">
    <button class="start" aria-label="Start"><svg class="i20"><use href="#windows"/></svg></button>
    <label class="tasksearch"><svg class="i20"><use href="#search"/></svg><input type="text" placeholder="Type here to search" aria-label="Type here to search"></label>
    <div class="apps">
      <button aria-label="Cortana"><svg width="20" height="20" viewBox="0 0 20 20"><circle cx="10" cy="10" r="8.500" fill="none" stroke="#fff" stroke-width="3"/></svg></button>
      <button aria-label="Task view"><svg class="i20"><use href="#taskview"/></svg></button>
      <button aria-label="Mail">
        <svg width="32" height="30" viewBox="0 0 32 30"><path d="M1 9 16 0l15 9v20H1z" fill="#0b57a5"/><path d="M3 9h26L16 19z" fill="#f2f2f2"/><path d="M1 9v20h30V9L16 20z" fill="#28a8ea"/><path d="M1 29 16 17l15 12z" fill="#1a86d8"/></svg>
        <span class="badge">60</span>
      </button>
      <button aria-label="Store"><svg width="30" height="34" viewBox="0 0 30 34"><path d="M9 8V2h12v6" fill="none" stroke="#2aa3dd" stroke-width="2.500"/><path d="M0 6h30v24c0 3-1 4-4 4H4c-3 0-4-1-4-4z" fill="#f4f4f4"/><path d="M9 13h6v6H9z" fill="#f25022"/><path d="M16 13h6v6h-6z" fill="#5ea500"/><path d="M9 20h6v6H9z" fill="#00a4ef"/><path d="M16 20h6v6h-6z" fill="#ffb900"/></svg></button>
      <button class="run" aria-label="Edge">
        <svg width="32" height="32" viewBox="0 0 32 32"><defs><linearGradient id="eg"><stop offset="0" stop-color="#1c9de0"/><stop offset="1" stop-color="#5bd75b"/></linearGradient></defs><circle cx="16" cy="16" r="15" fill="#1466b8"/><path d="M1 15C2-4 31-4 31 13c0 6-7 8-11 5 3-4-1-9-6-9S3 12 1 15z" fill="url(#eg)"/><path d="M19 18c3 4 8 4 11 2-1 3-4 6-7 8-7-1-9-6-4-10z" fill="#16211e"/><circle cx="8" cy="24" r="7" fill="#b8b8b8"/><circle cx="8" cy="22" r="3" fill="#f4f4f4"/><path d="M3 29c1-5 9-5 10 0-3 3-7 3-10 0z" fill="#f4f4f4"/></svg>
      </button>
      <button class="run" aria-label="Transfer"><svg width="28" height="32" viewBox="0 0 28 32"><path d="M0 0h17v24H0z" fill="#0b3c5c"/><path d="M3 3h17l8 8v20H12l-9-8z" fill="#12bfe0"/><path d="M3 3h17l3 8H10v12H3z" fill="#f4f4f4"/><path d="M8 15h9v-5l9 7-9 7v-5H8z" fill="#fff"/></svg></button>
      <button class="run" aria-label="File Explorer"><svg width="30" height="26" viewBox="0 0 30 26"><path d="M1 0h11l3 4h15v21H1z" fill="#e0a21b"/><path d="M1 6h29v19H1z" fill="#fcd462"/><path d="M6 26V14h19v12h-5v-6h-9v6z" fill="#3a87cf"/></svg></button>
      <button class="run" aria-label="Notepad"><svg width="28" height="30" viewBox="0 0 28 30"><path d="M9 2h18l-7 27-4-2z" fill="#c08a3e"/><path d="M9 2h16l-8 26-17-4z" fill="#8ed3da"/><path d="m8 6 15 1-5 19-17-3z" fill="#bfe8ec"/><path d="M0 24l17 4 2-8-16-3z" fill="#4f9aa5"/></svg></button>
      <button class="run current" aria-label="After Effects"><span class="ae">Ae</span></button>
    </div>
    <div class="tray">
      <i class="sunny"></i><span class="weather">56°F&nbsp; Sunny</span>
      <svg class="i16"><use href="#caret"/></svg>
      <svg width="16" height="20" viewBox="0 0 16 20"><path d="M2 5h8v10H2zM10 8l5-2v8l-5-2M3 2c2-2 5-2 7 0M3 18c2 2 5 2 7 0" fill="none" stroke="#fff" stroke-width="1.300"/></svg>
      <svg width="22" height="22" viewBox="0 0 22 22"><path d="M1 3 20 1v18L1 17zM6 9c1-4 6-4 7-1M13 4v4H9M14 11c-1 4-6 4-8 1" fill="none" stroke="#fff" stroke-width="1.300"/><circle cx="16" cy="17" r="5" fill="#2f74c4"/></svg>
      <svg width="20" height="16" viewBox="0 0 20 16"><path d="M4 4h14v11H4zM18 7h2v5h-2zM0 3h5v4H0zM1 0v3M4 0v3" fill="#fff" stroke="#fff"/></svg>
      <svg width="18" height="18" viewBox="0 0 18 18"><path d="M1 17C1 8 8 1 17 1M5 17c0-7 5-12 12-12M9 17c0-5 3-8 8-8M13 17c0-3 2-4 4-4" fill="none" stroke="#fff" stroke-width="1.300"/></svg>
      <svg width="20" height="18" viewBox="0 0 20 18"><path d="M1 6h3l4-4v14l-4-4H1zM11 6c2 2 2 4 0 6M14 3c4 4 4 8 0 12M16 1c5 5 5 11 0 16" fill="none" stroke="#fff" stroke-width="1.300"/></svg>
      <svg width="22" height="22" viewBox="0 0 22 22"><path d="M8 15C4 12 1 14 1 18s6 4 7 0l8-16c2-2 4 0 3 2l-8 13M9 10l4-8M14 11c3-3 7-1 6 1s-4 0-5 0" fill="none" stroke="#fff" stroke-width="1.300"/></svg>
      <span class="lang">ENG</span>
      <time>7:56 AM<br>12/11/2021</time>
      <svg width="22" height="20" viewBox="0 0 22 20"><path d="M1 1h20v14h-7l-3 4-3-4H1z" fill="none" stroke="#fff" stroke-width="1.400"/></svg>
    </div>
  </footer>

  <!-- floating script panel -->
  <div class="wingman">
    <div class="wm-bar"><button aria-label="Close">&times;</button></div>
    <div class="wm-title">Keyframe Wingman <svg class="i12"><use href="#menu"/></svg></div>
    <div class="wm-grid">
      <input class="ease-in" type="range" min="0" max="100" value="39" aria-label="Ease in">
      <button aria-label="Apply"><svg class="i12"><use href="#hourglass"/></svg></button>
      <input class="ease-out" type="range" min="0" max="100" value="60" aria-label="Ease out">
      <span class="blue right">60</span>
      <button class="chainbtn" aria-label="Link"><svg class="i16"><use href="#chain"/></svg></button>
      <span class="blue">60</span>
    </div>
    <em class="wm-info">i</em>
  </div>

</body>

</html>
```

FILE: styles.css
```css
* {
  box-sizing: border-box;
}

body {
  margin: 0;
  height: 100vh;
  display: flex;
  flex-direction: column;
  overflow: hidden;
  background: #161616;
  color: #a3a3a3;
  font: 14px/18px Lato, sans-serif;
}

p, h2 {
  margin: 0;
}

a {
  color: inherit;
  text-decoration: none;
}

button {
  display: flex;
  align-items: center;
  justify-content: center;
  padding: 0;
  border: 0;
  background: none;
  color: inherit;
  font: inherit;
}

input, select {
  border: 0;
  background: none;
  color: inherit;
  font: inherit;
  min-width: 0;
}

select {
  appearance: none;
}

svg {
  fill: currentColor;
  flex: none;
}

.sprite { position: absolute; width: 0; height: 0; }
.i8 { width: 8px; height: 8px; }
.i12 { width: 12px; height: 12px; }
.i14 { width: 14px; height: 14px; }
.i16 { width: 16px; height: 16px; }
.i18 { width: 18px; height: 18px; }
.i20 { width: 20px; height: 20px; }
.i22 { width: 22px; height: 20px; }
.i24 { width: 24px; height: 20px; }
.more-i { width: 14px; height: 12px; color: #b5b5b5; }
.set-i { width: 24px; height: 14px; color: #b5b5b5; }
.sm-i { width: 22px; height: 16px; color: #b5b5b5; }
.comp-i { width: 21px; height: 17px; }
.folder-i { width: 17px; height: 14px; }
.lock-i { width: 12px; height: 14px; }
.watch-i { width: 14px; height: 18px; margin-right: 7px; }
.dropper-i { width: 24px; height: 10px; }
.blue { color: #2d8ceb; }

.swatch { display: inline-block; width: 13px; height: 13px; flex: none; }
.red { background: #b03a3a; }
.tan { background: #a8967a; }
.yellow { background: #e5d84f; }
.navy { background: #130a42; }

.ae {
  width: 30px;
  height: 30px;
  border-radius: 5px;
  background: #00005b;
  color: #9999ff;
  font: bold 18px/30px "Open Sans", sans-serif;
  text-align: center;
}

.ae.small {
  width: 16px;
  height: 16px;
  border-radius: 3px;
  font-size: 10px;
  line-height: 15px;
}

/* window chrome */

.titlebar {
  flex: none;
  height: 29px;
  display: flex;
  align-items: center;
  gap: 7px;
  padding: 0 4px;
  background: #17404c;
  color: #fff;
  font: 14px/20px "Open Sans", sans-serif;
}

.winbuttons {
  display: flex;
  margin-left: auto;
}

.winbuttons button {
  width: 58px;
  height: 29px;
}

.menubar {
  flex: none;
  height: 25px;
  display: flex;
  gap: 15px;
  padding-left: 7px;
  background: #fff;
  border-bottom: 2px solid #ececec;
  color: #000;
  font: 14px/25px "Open Sans", sans-serif;
}

.toolbar {
  flex: none;
  height: 34px;
  display: flex;
  align-items: center;
  background: #232323;
  border-bottom: 3px solid #161616;
  color: #b5b5b5;
}

.toolbar button {
  position: relative;
  width: 30px;
  height: 28px;
  margin: 0 1px;
}

.grip {
  width: 3px;
  height: 20px;
  margin: 0 5px;
  background: repeating-linear-gradient(#444 0 1px, #232323 1px 3px);
}

.toolbar .homebtn {
  margin-right: 4px;
}

.group {
  display: flex;
  align-items: center;
  height: 26px;
  padding: 0 3px;
  border-left: 1px solid #111;
}

.toolbar .on {
  background: #151515;
  border: 1px solid #111;
  border-radius: 2px;
  color: #2d8ceb;
}

.toolbar .more::after {
  content: "";
  position: absolute;
  right: 1px;
  bottom: 2px;
  border: 2px solid transparent;
  border-right-color: #999;
  border-bottom-color: #999;
}

.dim { color: #505050; }
.dim .more::after { opacity: .4; }
.pins { width: 88px; border-right: 0; }
.faint { padding: 0; color: #444; }
.toolbar .faint button { width: 28px; height: 26px; }

.faint .frame {
  border: 1px solid #2e2e2e;
  color: #1d3d60;
}

.snapping {
  margin-left: 7px;
  padding-left: 8px;
  color: #8f8f8f;
}

.snapping input {
  appearance: none;
  width: 17px;
  height: 17px;
  margin: 0 5px 0 0;
  border: 2px solid #999;
  border-radius: 2px;
}

.snapping label {
  margin-right: 6px;
}

.workspaces {
  flex: 1;
  min-width: 0;
  height: 28px;
  display: flex;
  align-items: center;
  margin-left: 108px;
  padding-left: 28px;
  border-left: 1px solid #111;
  overflow: hidden;
  color: #8f8f8f;
}

.workspaces .i12 { margin: 0 27px 0 20px; }
.workspaces a + a { margin-left: 57px; }

.toolend {
  display: flex;
  align-items: center;
  gap: 8px;
  padding-right: 7px;
}

.sep {
  width: 2px;
  height: 20px;
  background: #191919;
}

.field {
  display: flex;
  align-items: center;
  height: 25px;
  padding: 0 8px;
  background: #161616;
  border: 1px solid #303030;
  border-radius: 3px;
}

.field input {
  flex: 1;
  outline: 0;
}

.help {
  width: 243px;
  margin-left: 6px;
  padding: 0 6px;
}

.help input {
  margin-left: 12px;
}

.help input::placeholder {
  color: #a3a3a3;
  opacity: 1;
}

/* workspace */

.workspace {
  flex: 1;
  min-height: 0;
  display: flex;
  gap: 6px;
  padding-left: 1px;
}

.panel {
  display: flex;
  flex-direction: column;
  background: #232323;
}

.tabs {
  display: flex;
  align-items: center;
  height: 36px;
  flex: none;
}

.tab {
  display: flex;
  align-items: center;
  height: 28px;
  margin-top: 4px;
  border-bottom: 2px solid #c0c0c0;
  color: #b5b5b5;
}

.tab b {
  color: #3d84c8;
  font-weight: normal;
}

.project {
  width: 401px;
}

.project .tab {
  margin-left: 14px;
  padding-left: 2px;
  gap: 14px;
}

.project .tabs > .swatch {
  margin-left: 44px;
}

.project .effect {
  width: 194px;
  height: 28px;
  margin-left: 14px;
  border-right: 1px solid #161616;
  line-height: 28px;
  color: #6c6c6c;
  white-space: nowrap;
  overflow: hidden;
}

.effect span { color: #808080; }
.project .more-i { margin-left: 33px; }

.info {
  display: flex;
  gap: 7px;
  padding: 7px 8px 0;
  font-size: 12px;
  line-height: 16px;
}

.thumb {
  width: 142px;
  height: 80px;
  background: #000;
  border: 1px solid #111;
  outline: 1px solid #2c2c2c;
}

.info .name {
  font-size: 14px;
  font-weight: bold;
}

.tri {
  display: inline-block;
  margin-left: 4px;
  border: 5px solid transparent;
  border-top: 7px solid #fff;
  border-bottom: 0;
}

.project > .field {
  flex: none;
  margin: 51px 7px 7px 8px;
}

.items {
  width: 400px;
  margin-left: 1px;
  border-collapse: collapse;
  table-layout: fixed;
}

.items th {
  height: 26px;
  padding: 0;
  background: #313131;
  border-top: 2px solid #111;
  border-bottom: 2px solid #111;
  font-size: 12px;
  font-weight: normal;
  text-align: left;
}

.items th div {
  display: flex;
  align-items: center;
  justify-content: space-between;
  margin-left: -22px;
  padding: 0 3px 0 7px;
  border-left: 1px solid #111;
  border-right: 1px solid #111;
}

.items td {
  height: 23px;
  padding: 0 0 0 4px;
}

.items td:first-child,
.items td:last-child,
.items td:nth-child(3) {
  padding-left: 0;
}

.items svg { display: block; }
.items .c-icon { width: 41px; }
.c-tag { width: 34px; }
.c-type { width: 35px; }
.c-flow { width: 20px; }
.items td:first-child svg:only-child { margin-left: 20px; }
.items .c-tag svg { margin-left: 7px; }
.items td .swatch { display: block; margin-left: 7px; }
.items td.c-type { padding-left: 2px; }
.items .c-type div { width: 32px; overflow: hidden; color: #808080; }

.sort {
  border: 8px solid transparent;
  border-top: 0;
  border-bottom: 7px solid #2d8ceb;
}

.sel { background: #2f2f2f; }

.items .hl {
  background: #a1a1a1;
  color: #161616;
  font-weight: bold;
}

.fold {
  display: flex;
  align-items: center;
  gap: 5px;
}

.projfoot {
  display: flex;
  align-items: center;
  height: 22px;
  margin-top: auto;
  padding-left: 5px;
  border-top: 1px solid #111;
}

.projfoot > .folder-i { margin: 0 12px 0 12px; }
.projfoot > .comp-i + .comp-i { margin-left: 13px; }

.bpc {
  width: 57px;
  height: 21px;
  margin: 0 8px 0 5px;
  border: 1px solid #2e2e2e;
  background: #1d1d1d;
  font-size: 12px;
}

.hscroll {
  width: 163px;
  height: 20px;
  margin-left: 9px;
  background: #1d1d1d;
}

.hscroll i {
  display: block;
  width: 61px;
  height: 19px;
  border-radius: 10px;
  background: #303030;
}

.viewer {
  flex: 1;
  min-width: 0;
}

.viewer .tab {
  margin-left: 14px;
}

.viewer .tab .swatch { margin: 0 13px 0 10px; }
.viewer .tab .lock-i { margin-right: 11px; }
.viewer .tab .i12 { margin-left: 12px; }
.layer { margin-left: 45px; color: #808080; }

.crumbs {
  display: flex;
  height: 31px;
  padding: 2px 0 0 25px;
  border-bottom: 1px solid #000;
}

.crumbs a {
  width: 87px;
  height: 21px;
  padding-left: 10px;
  background: #1b1b1b;
  border: 1px solid #2a2a2a;
  color: #3d84c8;
}

.stage {
  flex: 1;
  min-height: 0;
  padding-top: 45px;
}

.canvas {
  width: 640px;
  height: 100%;
  margin: 0 auto;
  padding: 49px 0 0 121px;
  background: #130a42;
  color: #f00;
  font: bold 46px/49px "DejaVu Sans", sans-serif;
}

.error {
  display: flex;
  height: 44px;
  padding-left: 6px;
  border: 2px solid #9c7f60;
  background: #eb7b12;
  color: #111;
}

.error > svg { margin-top: 12px; }

.msg {
  flex: 1;
  min-width: 0;
  margin-left: 7px;
  color: #000;
  font: 12px/22px "Open Sans", sans-serif;
  white-space: nowrap;
}

.msg p:first-child { line-height: 20px; }

.errbtns {
  display: flex;
  gap: 3px;
  padding-right: 3px;
}

.errbtns button {
  width: 18px;
  height: 18px;
  background: #ff8f10;
  color: #000;
}

.errbtns .dismiss { margin-right: 21px; }
.cheavy { width: 16px; height: 10px; }

.viewfoot {
  display: flex;
  align-items: center;
  height: 35px;
  padding: 8px 0 0 6px;
}

.pick {
  position: relative;
  display: flex;
}

.pick select {
  width: 100%;
  height: 24px;
  padding: 0 7px;
  background: #1d1d1d;
  border: 1px solid #303030;
  border-radius: 2px;
}

.pick svg {
  position: absolute;
  right: 7px;
  top: 6px;
}

.zoom { width: 87px; }
.res { width: 108px; }
.viewfoot .sep { margin: 0 6px; }

.viewbtns {
  display: flex;
}

.viewbtns button {
  width: 27px;
  height: 26px;
}

.viewbtns .on {
  background: #161616;
  color: #2d8ceb;
}

.off { color: #444; }
.exposure { width: 40px; padding-left: 2px; }

.timebox {
  width: 87px;
  height: 24px;
  border: 1px solid #303030;
  background: #1d1d1d;
  color: #8a8a8a;
}

.side {
  display: flex;
  width: 88px;
}

.stackp {
  width: 71px;
  overflow: hidden;
}

.stackp > a {
  display: block;
  height: 34px;
  margin-bottom: 4px;
  padding: 9px 0 0 16px;
  border-right: 7px solid #232323;
  background: #232323;
  color: #8a8a8a;
  white-space: nowrap;
  overflow: hidden;
}

.para {
  height: 189px;
  margin-bottom: 2px;
  background: #232323;
}

.para h2 {
  display: flex;
  align-items: center;
  gap: 4px;
  padding: 9px 0 0 16px;
  font-size: 14px;
  font-weight: normal;
  line-height: 18px;
  color: #b5b5b5;
}

.aligns {
  display: flex;
  gap: 5px;
  margin: 14px 0 1px;
  padding: 0 0 7px 9px;
  border-bottom: 2px solid #191919;
}

.aligns button {
  width: 26px;
  height: 26px;
}

.aligns .on {
  background: #101418;
  border: 1px solid #333;
  color: #3d84c8;
}

.ind {
  display: flex;
  align-items: center;
  gap: 5px;
  height: 22px;
  padding-left: 8px;
}

.vscroll {
  width: 15px;
  padding-left: 1px;
}

.vscroll i {
  display: block;
  width: 14px;
  height: 90%;
  border-radius: 7px;
  background: #303030;
}

/* timeline */

.timeline {
  flex: none;
  margin: 6px 1px 0;
  border: 1px solid #3f7ab5;
  background: #232323;
}

.tltab {
  display: flex;
  align-items: center;
  height: 33px;
  padding-left: 13px;
  color: #b5b5b5;
}

.tltab .swatch { margin: 0 14px 0 11px; }
.tltab .i12 { margin-left: 14px; }

.tlbody {
  display: flex;
}

.outline {
  width: 867px;
  border-right: 2px solid #111;
}

.tltools {
  display: flex;
  height: 45px;
  padding-top: 6px;
}

.tc {
  width: 132px;
  padding-left: 13px;
  color: #1f5a9a;
  font-size: 12px;
}

.tc b {
  display: block;
  padding-left: 5px;
  color: #2d8ceb;
  font-size: 19px;
  line-height: 20px;
}

.tltools .field {
  width: 524px;
  margin-top: 4px;
}

.tlicons {
  display: flex;
  align-items: center;
  height: 32px;
  margin-left: 20px;
  color: #b5b5b5;
}

.tlicons svg { margin-right: 13px; }
.tlicons svg:first-child, .tlicons svg:nth-child(4) { margin-right: 21px; }

.cols {
  display: flex;
  height: 25px;
  background: #313131;
  border-top: 1px solid #000;
  border-bottom: 2px solid #111;
  font-size: 12px;
}

.cols > div {
  display: flex;
  align-items: center;
  padding-top: 4px;
  border-right: 1px solid #161616;
}

.c-av { width: 86px; padding-left: 7px; gap: 3px; color: #b5b5b5; }
.c-label { width: 40px; padding-left: 15px; color: #b5b5b5; }
.c-num { width: 41px; padding-left: 7px; }
.cols .c-source { width: 362px; padding-left: 6px; }
.c-switch { width: 171px; padding-left: 6px; gap: 3px; color: #b5b5b5; }
.c-parent { width: 147px; padding-left: 7px; }
.c-switch em { width: 16px; font: italic 17px/20px "Liberation Serif", serif; }
.solo { width: 10px; height: 10px; margin: 0 3px; border-radius: 50%; background: #b5b5b5; }

.rows {
  background: #262626;
}

.row {
  display: flex;
  align-items: center;
  height: 21px;
  padding-top: 2px;
  border-bottom: 1px solid #1c1c1c;
}

.row.first, .lane.first { height: 19px; }
.row.first { padding-top: 0; }
.row.tall, .lane.tall { height: 65px; }

.vis {
  width: 18px;
  height: 18px;
  margin-left: 5px;
  display: flex;
  align-items: center;
  justify-content: center;
  background: #1b1b1b;
  color: #c4c4c4;
}

.vis.none { background: none; }

.prop {
  width: 512px;
  display: flex;
  align-items: center;
  padding-top: 1px;
  white-space: nowrap;
}

.prop > :first-child { margin-right: 10px; }
.lv0 { padding-left: 84px; }
.lv1 { padding-left: 106px; }
.lv2 { padding-left: 127px; }
.lv3 { padding-left: 148px; }
.lv4 { padding-left: 169px; }
.nokey { width: 16px; }
.prop .watch-i { margin-left: -2px; margin-right: 8px; }

.nokey::after {
  content: "";
  display: block;
  width: 2px;
  height: 2px;
  margin-left: 7px;
  background: #3c3c3c;
}

.val {
  width: 188px;
  display: flex;
  align-items: center;
}

.add {
  padding-left: 110px;
  gap: 6px;
}

.chars { width: 158px; }

.chars select {
  height: 18px;
  background: #1b1b1b;
  border-color: #222;
  color: #b5b5b5;
}

.chars svg { top: 3px; }
.amount { gap: 6px; }
.amount b { color: #3d84c8; font-weight: normal; }

.exprbtns {
  align-self: flex-start;
  gap: 6px;
}

.eq {
  width: 18px;
  height: 20px;
  margin-right: 18px;
  border: 1px solid #222;
}

.eq i {
  width: 12px;
  height: 8px;
  border: solid #2d8ceb;
  border-width: 3px 0;
}

.well {
  width: 30px;
  height: 20px;
  margin-right: 2px;
  border: 2px solid #999;
  background: #f00;
}

.drop {
  width: 30px;
  height: 20px;
  border: 2px solid #999;
}

.row.cut {
  height: 9px;
  align-items: flex-start;
  border: 0;
  background: #333;
  overflow: hidden;
}

.solidname {
  width: 512px;
  display: flex;
  gap: 22px;
  padding-left: 84px;
}

.none-t { margin-left: 20px; }

.tlfoot {
  display: flex;
  align-items: center;
  gap: 7px;
  height: 21px;
  padding-left: 8px;
  border-top: 1px solid #000;
}

.frt {
  width: 416px;
  margin-left: 4px;
}

.frt b {
  margin-left: 6px;
  color: #5fd3a8;
}

.toggle {
  height: 20px;
  padding: 0 6px;
  border: 1px solid #1b1b1b;
  color: #8a8a8a;
}

.graph {
  position: relative;
  flex: 1;
  min-width: 0;
  overflow: hidden;
}

.navbar, .workarea {
  border: solid #2d8ceb;
  border-width: 0 8px;
  border-radius: 6px;
}

.navbar {
  height: 11px;
  margin-top: 10px;
  background: #696969;
}

.workarea {
  height: 18px;
  margin-bottom: 2px;
  background: #606060;
  border-top: 1px solid #000;
}

.ruler {
  display: flex;
  justify-content: space-between;
  height: 24px;
  margin: 0 9px 0 8px;
  font-size: 12px;
}

.ruler span {
  position: relative;
  width: 1px;
  display: flex;
  flex-direction: column;
  align-items: center;
}

.ruler span::before {
  content: ".";
  position: absolute;
  left: 24px;
  color: #555;
}

.ruler span:last-child::before { content: none; }

.ruler span::after {
  content: "";
  width: 1px;
  height: 6px;
  background: #999;
}

.cache {
  height: 6px;
  margin: 0 9px 0 8px;
  border-bottom: 2px solid #063b0a;
  background: #19b324;
}

.lanes {
  padding-right: 9px;
  background: #282828;
}

.lane {
  position: relative;
  height: 21px;
  padding-left: 17px;
  border-bottom: 1px solid #1f1f1f;
  background: #333;
}

.lane code {
  font: 15px/24px "DejaVu Sans Mono", monospace;
}

.key::before {
  content: "";
  position: absolute;
  left: 4px;
  top: 4px;
  width: 10px;
  height: 13px;
  border: solid #a8a8a8;
  border-width: 1px 0;
  background: linear-gradient(#a8a8a8, #a8a8a8) center / 4px 100% no-repeat;
}

.lane.bar {
  height: 9px;
  margin-left: 8px;
  border: 0;
  border-top: 2px solid #1f1f1f;
  background: #7e3c3c;
}

.playhead {
  position: absolute;
  z-index: 1;
  left: 1px;
  top: 25px;
  width: 16px;
  height: 305px;
  background: linear-gradient(#5f9fe0, #5f9fe0) center / 2px 100% no-repeat;
}

.playhead svg { display: block; }

.tlzoom {
  display: flex;
  align-items: center;
  gap: 12px;
  height: 21px;
  padding-left: 6px;
}

.tlzoom input {
  appearance: none;
  width: 61px;
  margin: 0;
  background: linear-gradient(#3a3a3a, #3a3a3a) center / 100% 2px no-repeat;
}

.tlzoom input::-webkit-slider-thumb {
  appearance: none;
  width: 13px;
  height: 13px;
  border: 3px solid #999;
  border-radius: 50%;
  background: #232323;
}

.hill-s { width: 14px; height: 7px; }
.hill-b { width: 22px; height: 11px; }

.tlside {
  display: flex;
  flex-direction: column;
  align-items: center;
  width: 21px;
  padding-top: 47px;
  border-left: 2px solid #1b1b1b;
  color: #b5b5b5;
}

.marker-i { width: 14px; height: 18px; margin-bottom: 8px; }

.tlside .vscroll {
  width: 19px;
  height: 240px;
  margin-top: 4px;
  padding-top: 56px;
  background: #1d1d1d;
}

.tlside .vscroll i {
  width: 18px;
  height: 170px;
  border-radius: 9px;
}

/* windows taskbar */

.taskbar {
  flex: none;
  display: flex;
  height: 50px;
  background: #16211e;
  color: #fff;
  font-family: "Open Sans", sans-serif;
}

.start { width: 60px; }

.tasksearch {
  display: flex;
  align-items: center;
  gap: 12px;
  width: 430px;
  padding-left: 13px;
  border: 3px solid #b0b0b0;
  background: #fff;
  color: #222;
}

.tasksearch input {
  flex: 1;
  outline: 0;
  font-size: 18px;
}

.tasksearch input::placeholder {
  color: #333;
  opacity: 1;
}

.apps {
  display: flex;
}

.apps button {
  position: relative;
  width: 62px;
}

.run::after {
  content: "";
  position: absolute;
  left: 5px;
  right: 5px;
  bottom: 0;
  height: 3px;
  background: #7fa9b2;
}

.current { background: #1c3f43; }
.current::after { left: 0; right: 0; }

.badge {
  position: absolute;
  right: 4px;
  bottom: 4px;
  width: 24px;
  height: 24px;
  border: 1px solid #9cc;
  border-radius: 50%;
  background: #1d3a44;
  font-size: 14px;
  font-weight: bold;
  line-height: 22px;
}

.tray {
  display: flex;
  align-items: center;
  gap: 12px;
  margin: 0 5px 0 auto;
  padding-right: 24px;
  border-right: 1px solid #57605e;
}

.sunny {
  width: 24px;
  height: 24px;
  border-radius: 50%;
  background: linear-gradient(135deg, #ffe27a, #fa9a0c);
}

.weather {
  font-size: 17px;
  margin-right: 8px;
}

.lang { margin-left: 4px; }

.tray time {
  margin-right: 8px;
  line-height: 22px;
  text-align: center;
}

/* floating panel */

.wingman {
  position: absolute;
  z-index: 2;
  right: 352px;
  top: 0;
  width: 279px;
  height: 137px;
  border-top: 1px solid #4a5b66;
  background: #232323;
  box-shadow: 0 3px 8px #0008;
}

.wm-bar {
  display: flex;
  justify-content: flex-end;
  height: 37px;
  padding: 8px 1px 0 0;
  background: #fff;
}

.wm-bar button {
  width: 25px;
  height: 25px;
  background: #e3e3e3;
  color: #f4f4f4;
}

.wm-title {
  display: flex;
  align-items: center;
  gap: 14px;
  height: 38px;
  padding-left: 17px;
  color: #b5b5b5;
}

.wm-grid {
  display: grid;
  grid-template-columns: 105px 25px 105px;
  align-items: center;
  gap: 5px 8px;
  margin-top: 8px;
  padding-left: 14px;
}

.wm-grid button {
  width: 25px;
  height: 25px;
  background: #181818;
}

.wm-grid .chainbtn {
  width: 19px;
  height: 18px;
  margin: 0 auto;
}

.right { text-align: right; }

.wm-grid input {
  appearance: none;
  width: 105px;
  height: 14px;
  margin: 0;
}

.wm-grid input::-webkit-slider-runnable-track {
  height: 3px;
}

.ease-in { background: linear-gradient(90deg, #000 40%, #d8d8d8 40%) center / 100% 3px no-repeat; }
.ease-out { background: linear-gradient(90deg, #d8d8d8 60%, #000 60%) center / 100% 3px no-repeat; }

.wm-grid input::-webkit-slider-thumb {
  appearance: none;
  width: 13px;
  height: 13px;
  margin-top: -5px;
  border-radius: 50%;
  background: #d0d0d0;
}

.wm-info {
  position: absolute;
  right: 22px;
  bottom: 4px;
  font: italic bold 16px/20px "Liberation Serif", serif;
}

.wingman::after {
  content: "";
  position: absolute;
  left: 2px;
  right: 2px;
  bottom: 1px;
  height: 1px;
  background: #fff;
}
```
